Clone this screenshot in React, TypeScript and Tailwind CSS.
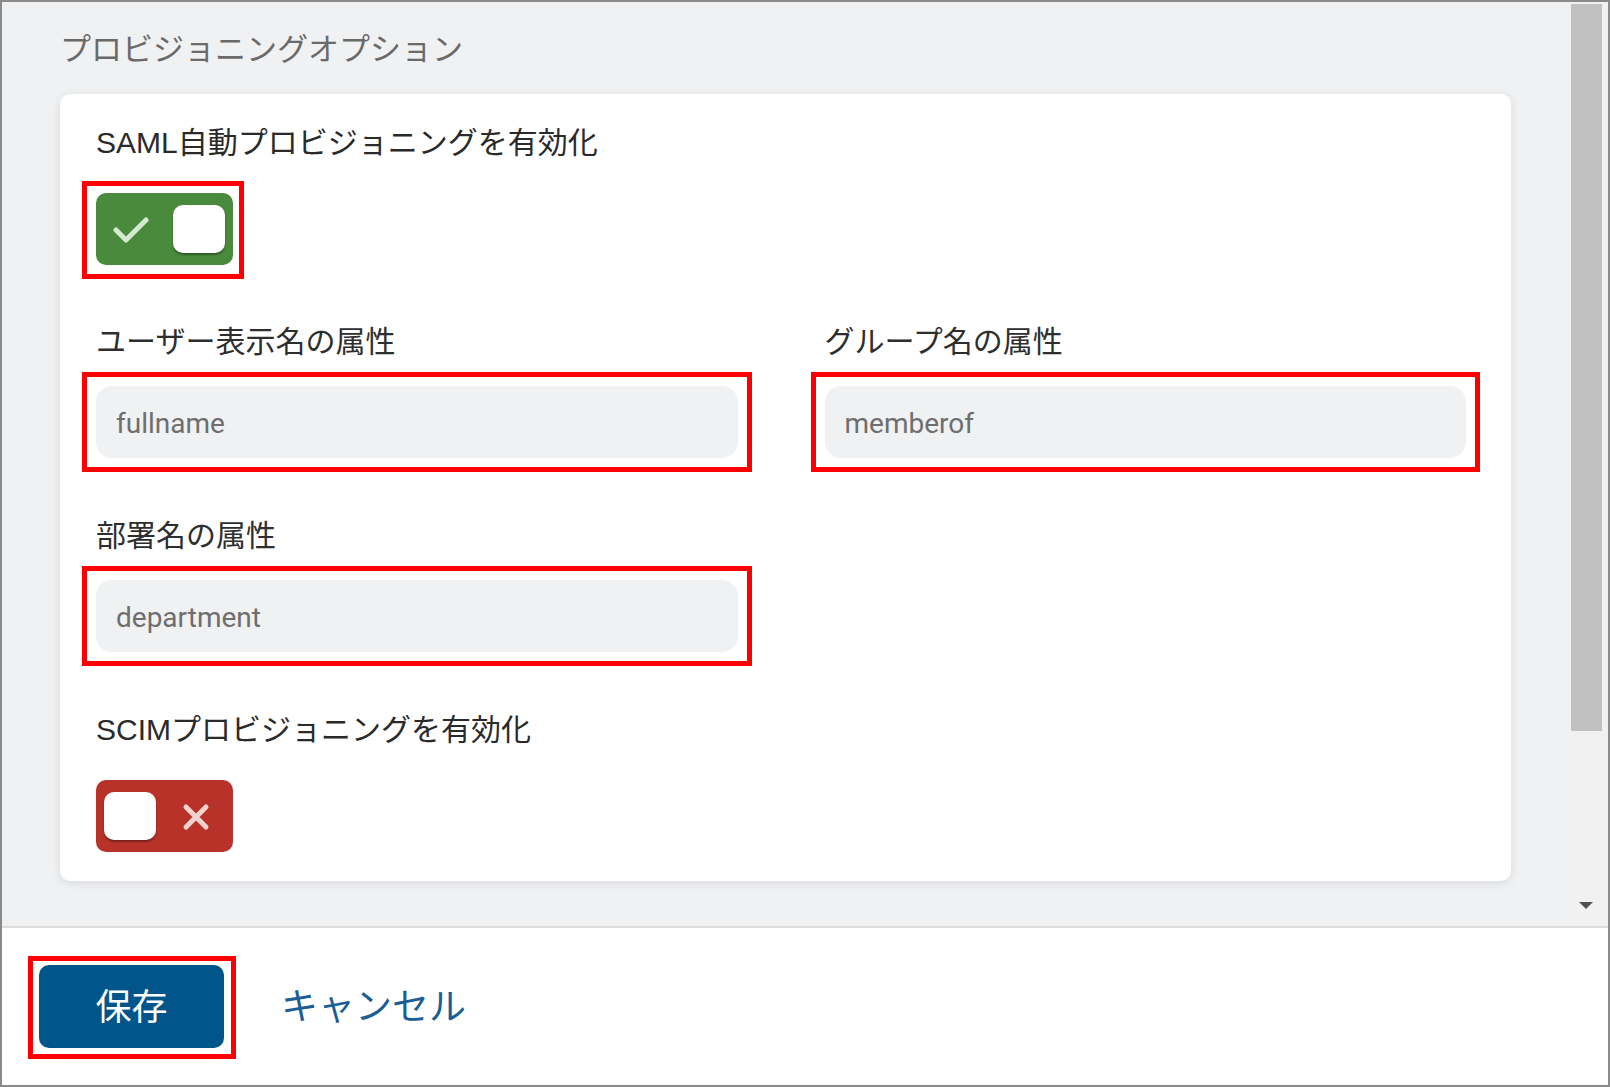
import React from "react";

const jp = { fontFamily: '"Liberation Sans", "Noto Sans CJK JP", sans-serif' };
const rb = { fontFamily: 'Roboto, "Noto Sans CJK JP", sans-serif' };

function Field({ label, value }: { label: string; value: string }) {
  return (
    <div className="flex flex-col">
      <div className="h-[40px] leading-[40px] text-[30px] text-[#2e2e2e]" style={jp}>
        {label}
      </div>
      <div className="mt-[24px] outline-[5px] outline-solid outline-[#ff0000] outline-offset-[9px]">
        <div
          className="h-[72px] rounded-[16px] bg-[#f0f1f3] pl-[20px] pt-[4px] flex items-center text-[28px] text-[#6e6e6e]"
          style={rb}
        >
          {value}
        </div>
      </div>
    </div>
  );
}

export default function App() {
  return (
    <div className="w-[1610px] h-[1087px] border-2 border-[#8a8a8a] flex flex-col bg-white overflow-hidden">
      <div className="h-[924px] flex bg-[#f0f1f3]">
        <div className="flex-1 pl-[58px] pt-[28px]">
          <div className="h-[40px] leading-[40px] text-[31px] text-[#6a6a6a]" style={jp}>
            プロビジョニングオプション
          </div>
          <div className="mt-[24px] w-[1451px] bg-white rounded-[10px] shadow-[0_2px_10px_rgba(0,0,0,0.10)] pl-[36px] pr-[45px] pt-[29px] pb-[29px]">
            <div className="h-[40px] leading-[40px] text-[30px] text-[#2a2a2a]" style={jp}>
              SAML自動プロビジョニングを有効化
            </div>
            <div className="mt-[30px] relative w-[137px] h-[72px] rounded-[10px] bg-[#4a8a3d]">
              <svg className="absolute left-[17px] top-[23px]" width="36" height="28" viewBox="0 0 36 28">
                <path d="M3 14 L13 24 L33 4" fill="none" stroke="#d6e8d1" strokeWidth="5" strokeLinecap="round" strokeLinejoin="round" />
              </svg>
              <div className="absolute right-[8px] top-[12px] w-[52px] h-[48px] rounded-[10px] bg-white shadow-[0_2px_2px_rgba(0,0,0,0.35)]" />
              <div className="absolute left-[-14px] top-[-12px] w-[162px] h-[98px] border-[5px] border-[#ff0000] pointer-events-none" />
            </div>

            <div className="mt-[57px] grid grid-cols-2 gap-x-[87px]">
              <Field label="ユーザー表示名の属性" value="fullname" />
              <Field label="グループ名の属性" value="memberof" />
            </div>

            <div className="mt-[58px] grid grid-cols-2 gap-x-[87px]">
              <Field label="部署名の属性" value="department" />
            </div>

            <div className="mt-[58px] h-[40px] leading-[40px] text-[30px] text-[#2a2a2a]" style={jp}>
              SCIMプロビジョニングを有効化
            </div>
            <div className="mt-[30px] relative w-[137px] h-[72px] rounded-[10px] bg-[#b8322a]">
              <div className="absolute left-[8px] top-[12px] w-[52px] h-[48px] rounded-[10px] bg-white shadow-[0_2px_2px_rgba(0,0,0,0.35)]" />
              <svg className="absolute left-[86px] top-[23px]" width="28" height="28" viewBox="0 0 28 28">
                <path d="M4 4 L24 24 M24 4 L4 24" fill="none" stroke="#f2d3d0" strokeWidth="5" strokeLinecap="round" />
              </svg>
            </div>
          </div>
        </div>
        <div className="w-[40px] flex flex-col items-start bg-[#f1f1f1]">
          <div className="ml-[3px] mt-[2px] w-[31px] h-[727px] bg-[#c1c1c1]" />
          <div className="flex-1" />
          <svg className="ml-[11px] mb-[17px]" width="14" height="7" viewBox="0 0 14 7">
            <path d="M0 0 L14 0 L7 7 Z" fill="#505050" />
          </svg>
        </div>
      </div>
      <div className="h-[2px] bg-[#dcdcdc]" />
      <div className="flex-1 flex items-center pl-[37px]">
        <div className="relative w-[185px] h-[83px]">
          <div
            className="w-[185px] h-[83px] rounded-[10px] bg-[#00558b] text-white text-[36px] flex items-center justify-center pt-[2px]"
            style={jp}
          >
            保存
          </div>
          <div className="absolute left-[-11px] top-[-9px] w-[208px] h-[103px] border-[5px] border-[#ff0000] pointer-events-none" />
        </div>
        <div className="ml-[57px] pt-[3px] text-[37px] text-[#1b5e95]" style={jp}>
          キャンセル
        </div>
      </div>
    </div>
  );
}
